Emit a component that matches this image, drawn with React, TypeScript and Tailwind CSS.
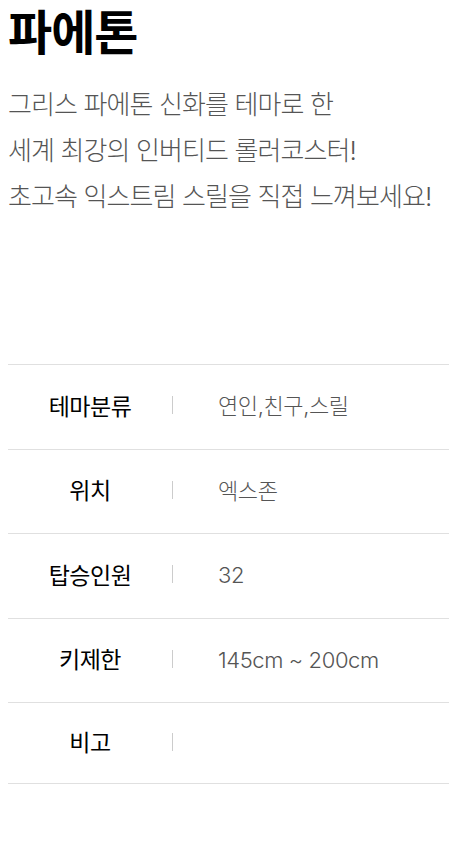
import React from "react";

const rows: [string, string][] = [
  ["테마분류", "연인,친구,스릴"],
  ["위치", "엑스존"],
  ["탑승인원", "32"],
  ["키제한", "145cm ~ 200cm"],
  ["비고", ""],
];

export default function App() {
  return (
    <div
      className="bg-white min-h-[844px] pl-2"
      style={{ fontFamily: 'Inter, "Noto Sans CJK KR", "Noto Sans", sans-serif' }}
    >
      <h1 className="pt-[2px] text-[48px] leading-[62px] font-bold tracking-[-1px] text-black">
        파에톤
      </h1>
      <p className="mt-[18px] text-[26px] leading-[46px] font-light tracking-[-0.9px] text-[#555]">
        그리스 파에톤 신화를 테마로 한
        <br />
        세계 최강의 인버티드 롤러코스터!
        <br />
        초고속 익스트림 스릴을 직접 느껴보세요!
      </p>
      <div className="mt-[144px] border-t border-[#e0e0e0]">
        {rows.map(([k, v], i) => (
          <div
            key={k}
            className={`flex items-center border-b border-[#e0e0e0] ${i === rows.length - 1 ? "h-[81px]" : "h-[84.6px]"}`}
          >
            <div className="w-[164px] text-center text-[23px] tracking-[-0.5px] text-black">
              {k}
            </div>
            <div className="w-px h-[18px] bg-[#ccc] -mt-[3px]" />
            <div className="pl-[45px] text-[22px] tracking-[-0.4px] font-light text-[#555]">
              {v}
            </div>
          </div>
        ))}
      </div>
    </div>
  );
}
